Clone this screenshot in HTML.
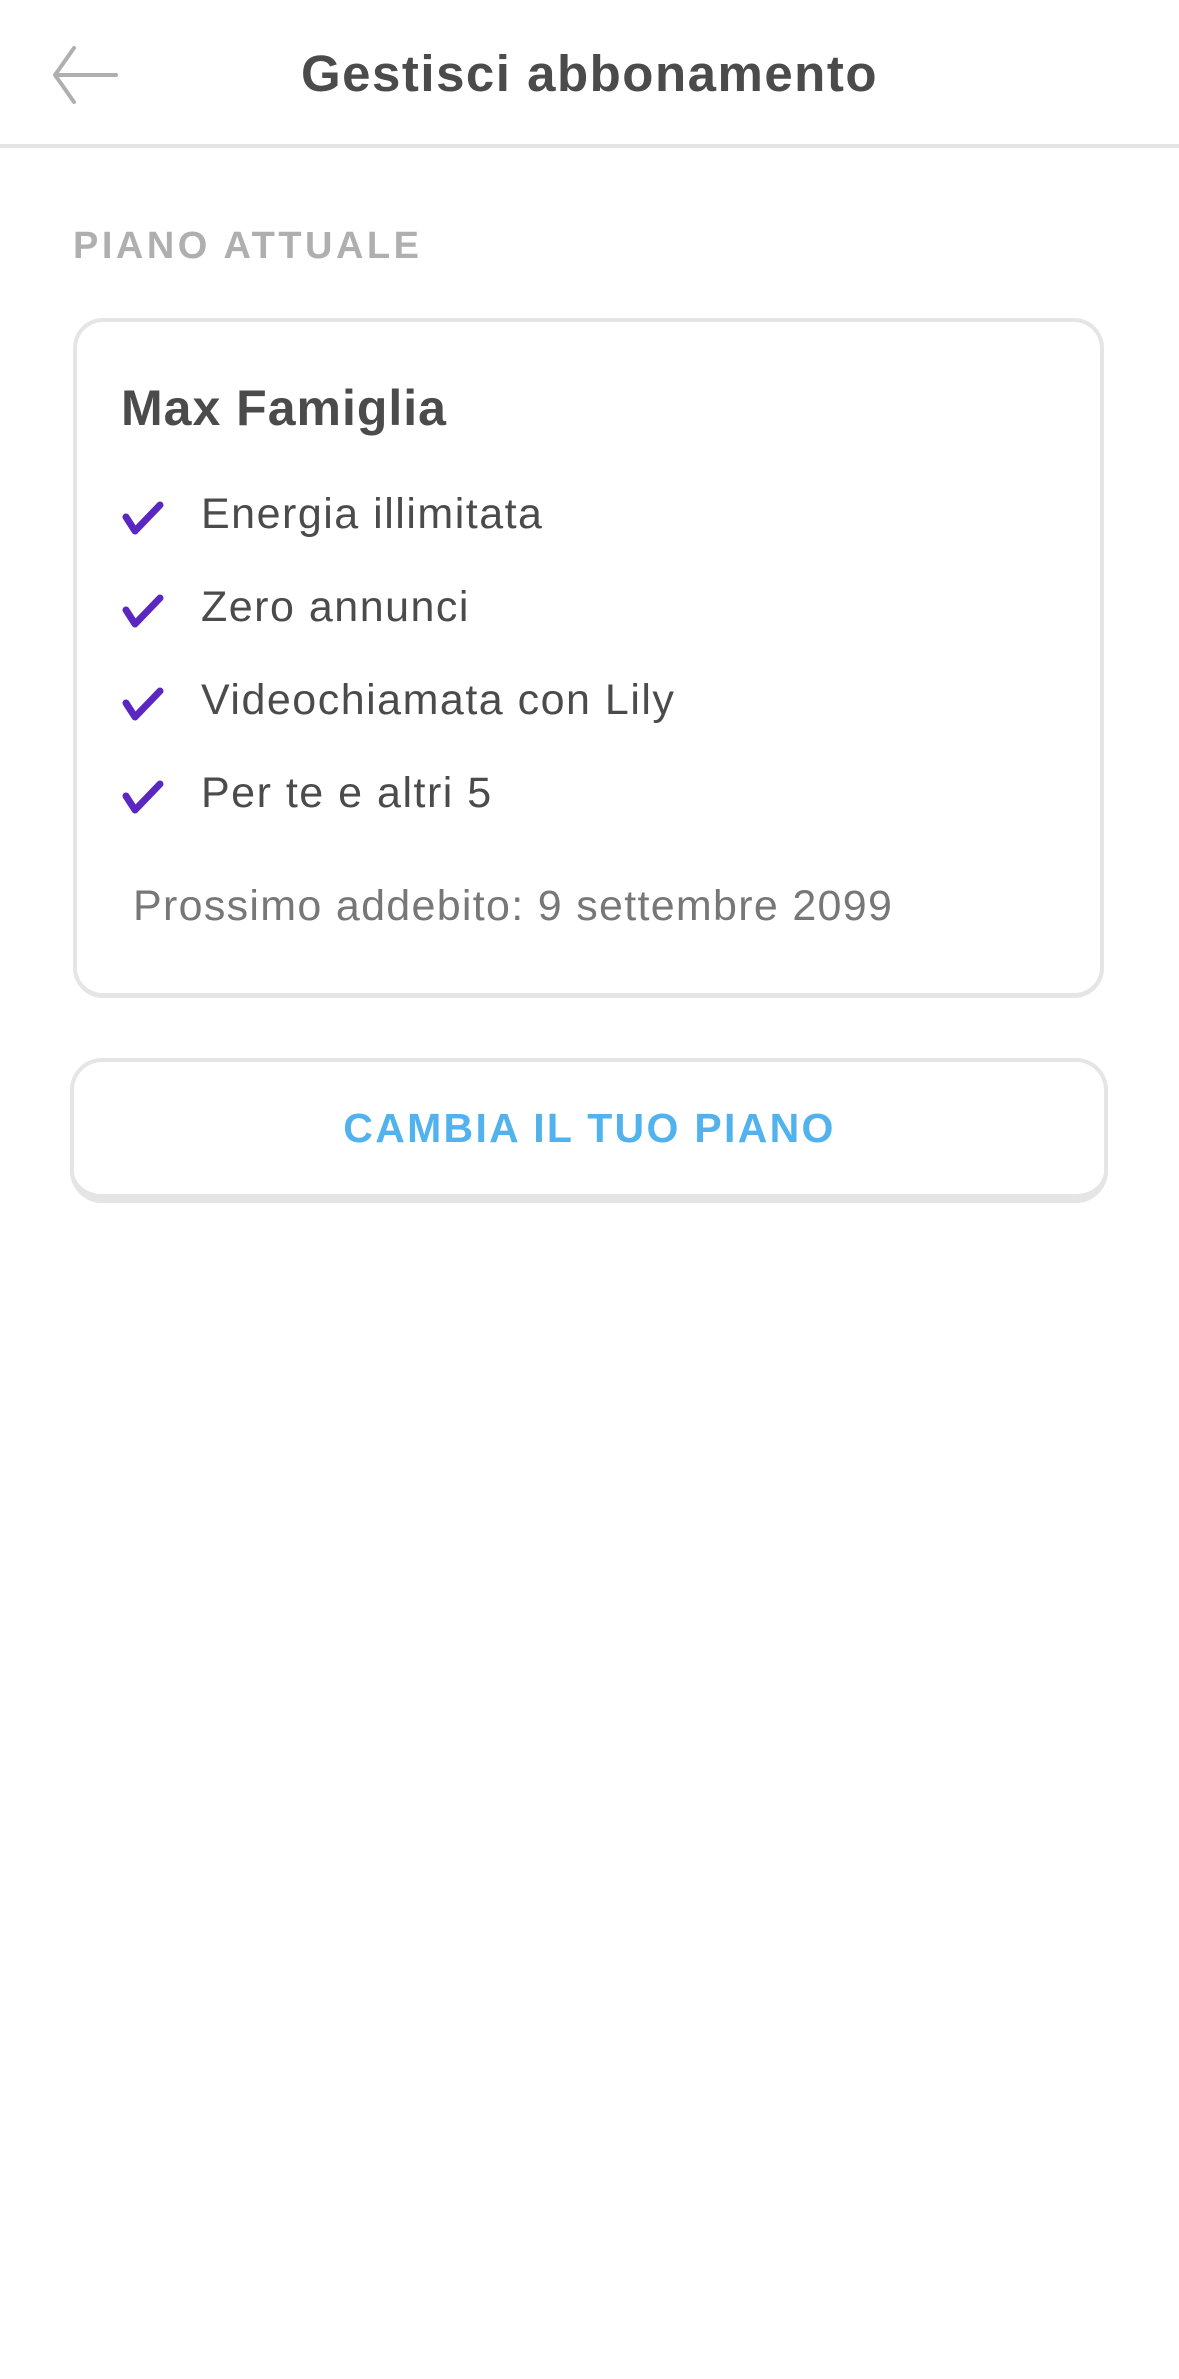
<!DOCTYPE html>
<html><head><meta charset="utf-8"><style>
html,body{margin:0;padding:0;background:#fff;}
body{width:1179px;height:2379px;position:relative;overflow:hidden;font-family:"Liberation Sans",sans-serif;color:#4b4b4b;}
.abs{position:absolute;white-space:nowrap;}
.title{left:0;width:1179px;text-align:center;top:44px;font-size:51px;font-weight:bold;line-height:60px;letter-spacing:1.5px;}
.div{left:0;top:144px;width:1179px;height:4px;background:#e5e5e5;}
.lbl{left:73px;top:224px;font-size:38px;font-weight:bold;color:#afafaf;letter-spacing:3.5px;line-height:44px;}
.card{left:73px;top:318px;width:1031px;height:680px;box-sizing:border-box;border:4px solid #e5e5e5;border-bottom-width:5px;border-radius:30px;}
.plan{left:121px;top:378px;font-size:50px;font-weight:bold;line-height:60px;letter-spacing:1px;}
.item{left:201px;font-size:43px;line-height:50px;letter-spacing:1.5px;}
.chk{left:121px;width:44px;height:36px;}
.next{left:133px;top:881px;font-size:43px;color:#777;line-height:50px;letter-spacing:1.3px;}
.btn{left:70px;top:1058px;width:1038px;height:145px;box-sizing:border-box;border:4px solid #e5e5e5;border-bottom-width:9px;border-radius:32px;}
.btxt{left:0;width:1179px;text-align:center;top:1104px;font-size:41px;font-weight:bold;color:#52b2ee;letter-spacing:2.3px;line-height:48px;}
</style></head><body>
<svg class="abs" style="left:50px;top:44px" width="72" height="62" viewBox="0 0 72 62"><path d="M66 31H6M24 4L5 31L24 58" fill="none" stroke="#afafaf" stroke-width="4" stroke-linecap="round" stroke-linejoin="round"/></svg>
<div class="abs title">Gestisci abbonamento</div>
<div class="abs div"></div>
<div class="abs lbl">PIANO ATTUALE</div>
<div class="abs card"></div>
<div class="abs plan">Max Famiglia</div>

<svg class="abs chk" style="top:500px" viewBox="0 0 44 36"><path d="M5 17L14 31L39 5" fill="none" stroke="#5b27c1" stroke-width="7" stroke-linecap="round" stroke-linejoin="round"/></svg>
<div class="abs item" style="top:489px">Energia illimitata</div>
<svg class="abs chk" style="top:593px" viewBox="0 0 44 36"><path d="M5 17L14 31L39 5" fill="none" stroke="#5b27c1" stroke-width="7" stroke-linecap="round" stroke-linejoin="round"/></svg>
<div class="abs item" style="top:582px">Zero annunci</div>
<svg class="abs chk" style="top:686px" viewBox="0 0 44 36"><path d="M5 17L14 31L39 5" fill="none" stroke="#5b27c1" stroke-width="7" stroke-linecap="round" stroke-linejoin="round"/></svg>
<div class="abs item" style="top:675px">Videochiamata con Lily</div>
<svg class="abs chk" style="top:779px" viewBox="0 0 44 36"><path d="M5 17L14 31L39 5" fill="none" stroke="#5b27c1" stroke-width="7" stroke-linecap="round" stroke-linejoin="round"/></svg>
<div class="abs item" style="top:768px">Per te e altri 5</div>

<div class="abs next">Prossimo addebito: 9 settembre 2099</div>
<div class="abs btn"></div>
<div class="abs btxt">CAMBIA IL TUO PIANO</div>
</body></html>
